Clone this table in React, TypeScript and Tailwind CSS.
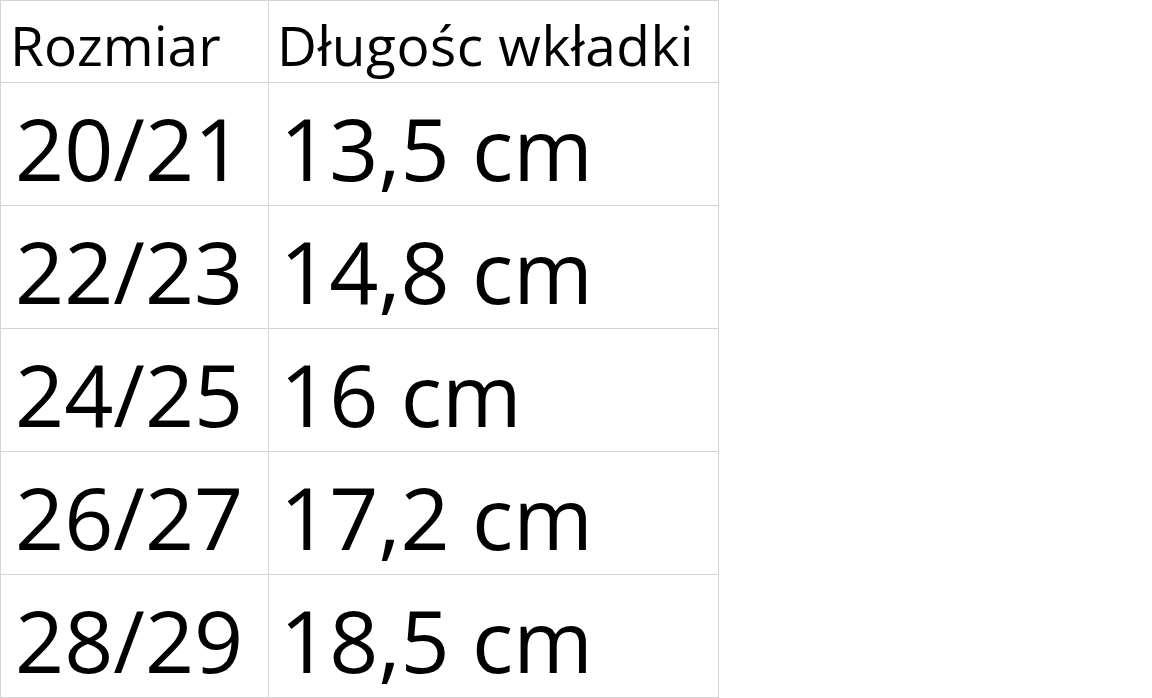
const rows = [
  ["20/21", "13,5 cm"],
  ["22/23", "14,8 cm"],
  ["24/25", "16 cm"],
  ["26/27", "17,2 cm"],
  ["28/29", "18,5 cm"],
]

export default function App() {
  return (
    <div className="w-[1152px] h-[698px] bg-white text-black" style={{ fontFamily: '"Open Sans", sans-serif' }}>
      <div className="grid grid-cols-[268px_450px] w-[719px] border-l border-t border-[#d4d4d4]">
        <div className="h-[82px] border-r border-b border-[#d4d4d4] pl-[9px] pt-[16px] text-[55px] leading-none">Rozmiar</div>
        <div className="h-[82px] border-r border-b border-[#d4d4d4] pl-[8px] pt-[16px] text-[55px] leading-none tracking-[0.5px] whitespace-nowrap">Długośc wkładki</div>
        {rows.map(([size, len]) => (
          <>
            <div key={size} className="h-[123px] border-r border-b border-[#d4d4d4] pl-[14px] pt-[22px] text-[86px] leading-none">{size}</div>
            <div key={len} className="h-[123px] border-r border-b border-[#d4d4d4] pl-[11px] pt-[22px] text-[86px] leading-none whitespace-nowrap">{len}</div>
          </>
        ))}
      </div>
    </div>
  )
}
